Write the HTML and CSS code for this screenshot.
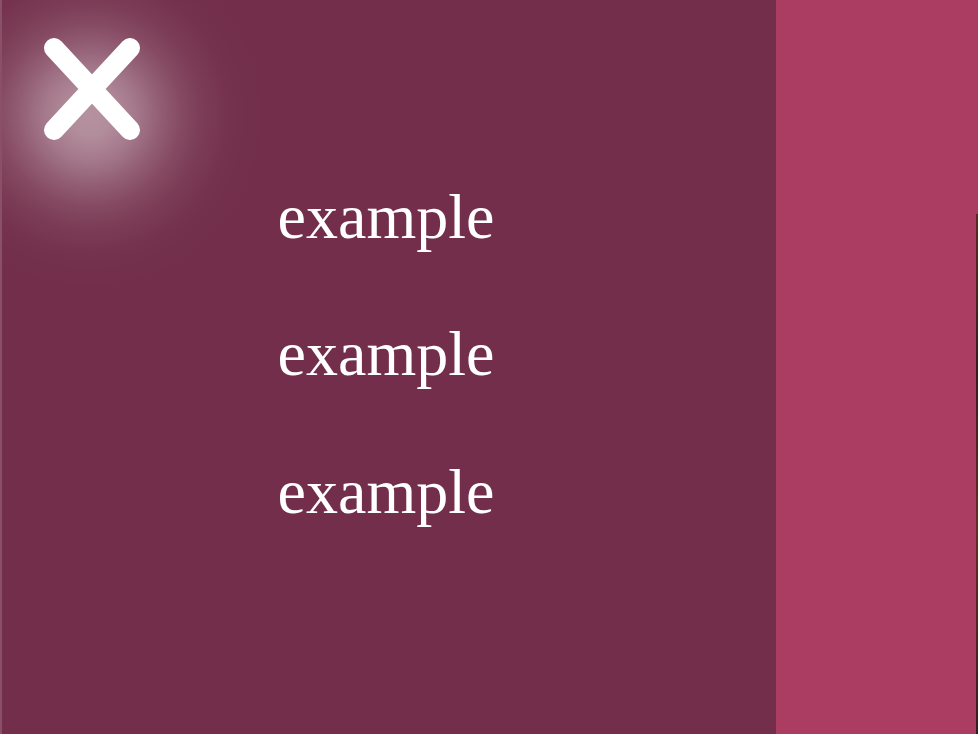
FILE: index.html
```html
<!DOCTYPE html>
<html>
<head>
<meta charset="utf-8">
<link rel="stylesheet" href="styles.css">
</head>
<body>
<div class="page">
  <aside class="panel">
    <button class="close" aria-label="Close">
      <svg width="100" height="106" viewBox="0 0 100 106">
        <path d="M12 11 L88 93 M88 11 L12 93" stroke="#fff" stroke-width="20" stroke-linecap="round" fill="none"/>
      </svg>
    </button>
    <nav class="menu">
      <a class="item" href="#">example</a>
      <a class="item" href="#">example</a>
      <a class="item" href="#">example</a>
    </nav>
  </aside>
  <main class="main">
    <div class="edge"></div>
  </main>
</div>
</body>
</html>
```
FILE: styles.css
```css
html, body {
  margin: 0;
  padding: 0;
  height: 100%;
  overflow: hidden;
}
.page {
  display: flex;
  height: 734px;
  width: 978px;
}
.panel {
  position: relative;
  width: 774px;
  flex: none;
  background: #722e4a;
  border-left: 2px solid #8a5068;
  overflow: hidden;
}
.panel::before {
  content: "";
  position: absolute;
  left: -92px;
  top: -65px;
  width: 360px;
  height: 360px;
  background: radial-gradient(circle closest-side at center,
    rgba(255,255,255,0.48) 0%,
    rgba(255,255,255,0.45) 12%,
    rgba(255,255,255,0.36) 25%,
    rgba(255,255,255,0.24) 38%,
    rgba(255,255,255,0.14) 50%,
    rgba(255,255,255,0.07) 62%,
    rgba(255,255,255,0.025) 76%,
    rgba(255,255,255,0.006) 88%,
    rgba(255,255,255,0) 100%);
}
.close {
  position: absolute;
  left: 40px;
  top: 37px;
  padding: 0;
  margin: 0;
  border: 0;
  background: none;
  display: block;
  line-height: 0;
}
.menu {
  position: relative;
  display: flex;
  flex-direction: column;
  align-items: center;
  margin-top: 147.7px;
  padding-right: 6px;
}
.item {
  display: block;
  font-family: "Liberation Serif", "Times New Roman", serif;
  font-size: 64px;
  line-height: 73px;
  padding: 32.25px 0;
  color: #ffffff;
  text-decoration: none;
}
.main {
  flex: 1;
  background: #ab3d62;
  display: flex;
  justify-content: flex-end;
  align-items: flex-end;
}
.edge {
  width: 2px;
  height: 520px;
  background: linear-gradient(180deg, #5a2a22, #3a1a1e 30%, #6a2a24 60%, #3a1a20);
}
```
